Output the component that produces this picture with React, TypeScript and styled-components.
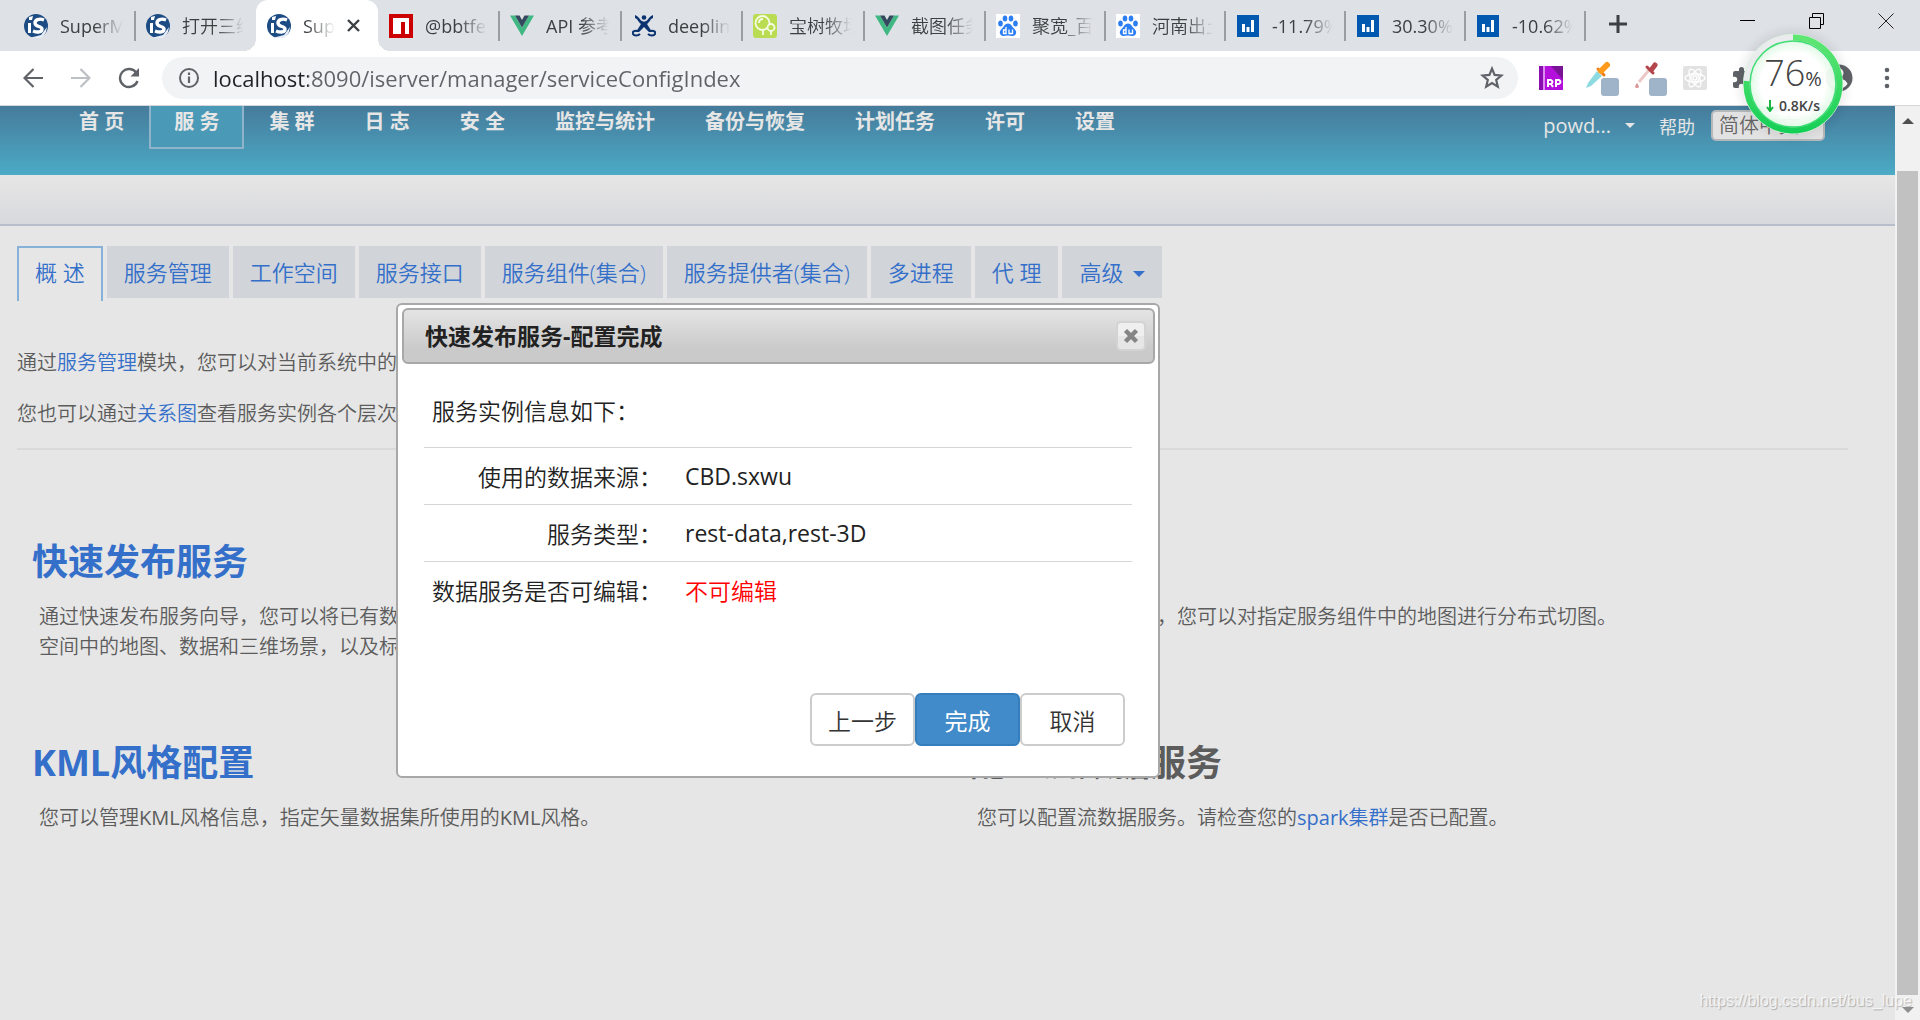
import React from "react";
import styled, { createGlobalStyle, css } from "styled-components";

const sans = `"Open Sans", "Noto Sans CJK SC", sans-serif`;

const GlobalStyle = createGlobalStyle`
  *, *::before, *::after { box-sizing: border-box; }
  body { margin: 0; font-family: ${sans}; background: #e6e6e6; }
  button, input, select { font-family: inherit; font-weight: inherit; }
  button { border: 0; padding: 0; background: none; cursor: pointer; }
  a { color: #346fc9; text-decoration: none; }
`;

/* ---------- browser window ---------- */

const Window = styled.div`
  position: relative;
  display: flex;
  flex-direction: column;
  height: 100vh;
  overflow: hidden;
`;

const TabStrip = styled.header`
  display: flex;
  height: 51px;
  padding-left: 13px;
  background: #dee1e6;
`;

const TabList = styled.nav`
  display: grid;
  grid-template-columns: repeat(4, 122px 121px) repeat(5, 120px);
`;

const BrowserTab = styled.button<{ $active?: boolean; $divided?: boolean }>`
  position: relative;
  display: flex;
  align-items: center;
  gap: 12px;
  min-width: 0;
  padding: 0 12px 0 11px;
  color: #3c4043;
  font-size: 18px;
  line-height: 50px;
  text-align: left;

  &:lang(zh) {
    font-weight: 350;
  }

  ${(p) =>
    p.$divided &&
    css`
      &::after {
        content: "";
        position: absolute;
        right: -1px;
        top: 11px;
        width: 2px;
        height: 30px;
        background: #9a9da1;
      }
    `}

  ${(p) =>
    p.$active &&
    css`
      padding-right: 18px;
      background: #fff;
      border-radius: 12px 12px 0 0;

      &::before,
      &::after {
        content: "";
        position: absolute;
        bottom: 0;
        width: 12px;
        height: 12px;
      }
      &::before {
        left: -12px;
        background: radial-gradient(circle at 0 0, #dee1e6 12px, #fff 12px);
      }
      &::after {
        right: -12px;
        background: radial-gradient(circle at 100% 0, #dee1e6 12px, #fff 12px);
      }
    `}
`;

const TabTitle = styled.span`
  flex: 1;
  min-width: 0;
  overflow: hidden;
  white-space: nowrap;
  mask-image: linear-gradient(90deg, #000 calc(100% - 28px), transparent);
`;

const Favicon = styled.svg`
  flex: none;
  width: 24px;
  height: 24px;
`;

const NewTab = styled.button`
  width: 36px;
  margin-left: 15px;
`;

const WindowControls = styled.div`
  display: flex;
  height: 45px;
  margin-left: auto;
`;

const WindowButton = styled.button`
  width: 69px;
`;

const Toolbar = styled.div`
  display: flex;
  align-items: center;
  height: 55px;
  padding: 0 16px;
  background: #fff;
  border-bottom: 1px solid #d5d7da;
`;

const ToolButton = styled.button`
  display: flex;
  align-items: center;
  justify-content: center;
  flex: none;
  width: 48px;
  height: 42px;
`;

const NavButtons = styled.div`
  display: flex;
  margin-left: -7px;
`;

const AddressBar = styled.label`
  display: flex;
  align-items: center;
  flex: 1;
  gap: 13px;
  height: 42px;
  margin-left: 9px;
  padding: 0 14px 0 16px;
  border-radius: 21px;
  background: #f1f3f4;
`;

const AddressInput = styled.input`
  flex: 1;
  min-width: 0;
  height: 42px;
  padding: 0;
  border: 0;
  outline: 0;
  font-size: 22px;
  color: #5f6368;
  background: linear-gradient(90deg, #202124 95px, #5f6368 95px);
  background-clip: text;
  -webkit-background-clip: text;
  -webkit-text-fill-color: transparent;
`;

const Extensions = styled.div`
  display: flex;
  align-items: center;
  margin-left: 9px;
`;

const MenuButton = styled(ToolButton)`
  width: 34px;
  margin-left: 7px;
`;

/* ---------- page ---------- */

const Viewport = styled.div`
  display: flex;
  flex: 1;
  min-height: 0;
`;

const Page = styled.main`
  position: relative;
  flex: 1;
  min-width: 0;
  overflow: hidden;
  background: #e6e6e6;
  color: #5c5c5c;
  font-weight: 350;
`;

const Latin = styled.span`
  font-weight: 400;
`;

const Banner = styled.div`
  display: flex;
  align-items: flex-start;
  justify-content: space-between;
  height: 69px;
  padding: 0 70px 0 54px;
  background: linear-gradient(#467b9b, #4babc6);
`;

const MainNav = styled.nav`
  display: flex;
`;

const NavLink = styled.a<{ $active?: boolean }>`
  height: 43px;
  padding: 0 23px;
  border: 2px solid transparent;
  border-top: 0;
  color: #e6e6e6;
  font-size: 20px;
  font-weight: 700;
  line-height: 32px;
  white-space: nowrap;
  ${(p) =>
    p.$active &&
    css`
      border-color: #8fb3cb;
      background: #4a99b6;
    `}
`;

const UserNav = styled.div`
  display: flex;
  align-items: center;
  height: 39px;
  font-weight: 400;
`;

const UserButton = styled.button`
  display: flex;
  align-items: center;
  gap: 14px;
  margin-right: 24px;
  color: #e6e6e6;
  font-size: 20px;
`;

const HelpLink = styled.a`
  margin-right: 16px;
  color: #e6e6e6;
  font-size: 18px;
`;

const LanguageSelect = styled.select`
  appearance: none;
  width: 114px;
  height: 31px;
  padding: 0 6px;
  border: 2px solid #b4b8ba;
  border-radius: 5px;
  background: #e2e2e2;
  color: #666;
  font-size: 20px;
  font-weight: 350;
  line-height: 26px;
`;

const Caret = styled.span<{ $size: number }>`
  border: ${(p) => p.$size}px solid transparent;
  border-top-color: currentColor;
  border-bottom: 0;
`;

const SubBand = styled.div`
  height: 51px;
  border-bottom: 2px solid #b7bdca;
  background: linear-gradient(#e6e6e6, #d8d9dc);
`;

const Content = styled.div`
  padding: 20px 47px 0 17px;
`;

const SectionTabs = styled.nav`
  display: flex;
  align-items: flex-start;
  gap: 4px;
  height: 55px;
`;

const SectionTab = styled.a<{ $active?: boolean }>`
  display: flex;
  align-items: center;
  gap: 10px;
  height: 52px;
  padding: 0 17px 3px;
  background: #d1d5da;
  font-size: 22px;
  white-space: nowrap;
  span {
    margin-top: 6px;
  }
  ${(p) =>
    p.$active &&
    css`
      height: 55px;
      padding: 0 16px 7px;
      border: 2px solid #86b2d8;
      border-bottom: 0;
      background: none;
    `}
`;

const Intro = styled.div`
  padding: 47px 0 19px;
  border-bottom: 2px solid #d9d9d9;
`;

const IntroText = styled.p`
  margin: 0;
  font-size: 20px;
  line-height: 30px;
  & + & {
    margin-top: 21px;
  }
`;

const Features = styled.div`
  display: grid;
  grid-template-columns: repeat(2, 1fr);
  column-gap: 58px;
  row-gap: 77px;
  margin-right: -2px;
  padding: 88px 0 0 15px;
`;

const FeatureTitle = styled.h2<{ $muted?: boolean }>`
  margin: 0;
  color: ${(p) => (p.$muted ? "#5c5c5c" : "#346fc9")};
  font-size: 36px;
  line-height: 48px;
`;

const FeatureText = styled.p`
  min-height: 60px;
  margin: 0;
  padding: 16px 0 0 7px;
  box-sizing: content-box;
  font-size: 20px;
  line-height: 30px;
  white-space: nowrap;
`;

/* ---------- wizard window over the page ---------- */

const Dialog = styled.section`
  position: absolute;
  left: 396px;
  top: 197px;
  display: flex;
  flex-direction: column;
  width: 764px;
  height: 475px;
  padding: 3px 3px 3px 4px;
  border: 2px solid #a8a8a8;
  border-radius: 6px;
  background: #fff;
  color: #222;
  font-size: 23px;
`;

const DialogHeader = styled.div`
  display: flex;
  align-items: center;
  justify-content: space-between;
  height: 56px;
  padding: 0 7px 0 21px;
  border: 2px solid #a8a8a8;
  border-radius: 6px;
  background: linear-gradient(#e4e4e4, #cacaca 75%);
`;

const DialogTitle = styled.h1`
  margin: 0;
  font-size: 23px;
  line-height: 32px;
`;

const CloseButton = styled.button`
  display: flex;
  align-items: center;
  justify-content: center;
  width: 30px;
  height: 30px;
  border: 2px solid #d3d3d3;
  border-radius: 5px;
  background: linear-gradient(#efefef 50%, #e6e6e6 50%);
`;

const DialogBody = styled.div`
  flex: 1;
  padding: 0 23px 0 22px;
`;

const InfoTable = styled.table`
  width: 100%;
  border-collapse: collapse;
  text-align: left;

  caption {
    height: 83px;
    padding: 12px 8px 0;
    line-height: 70px;
    text-align: left;
  }
  tr {
    height: 57px;
    border-top: 1px solid #d6d6d6;
  }
  th {
    width: 238px;
    padding: 0;
    font-weight: 350;
    text-align: right;
  }
  td {
    padding: 0 0 0 23px;
  }
`;

const Warning = styled.span`
  color: #f00;
`;

const DialogActions = styled.div`
  display: flex;
  justify-content: flex-end;
  padding: 0 30px 27px;
`;

const ActionButton = styled.button<{ $primary?: boolean }>`
  width: 105px;
  height: 53px;
  border: 2px solid ${(p) => (p.$primary ? "#357ebd" : "#ccc")};
  border-radius: 6px;
  background: ${(p) => (p.$primary ? "#428bca" : "#fff")};
  color: ${(p) => (p.$primary ? "#fff" : "#333")};
  font-size: 23px;
  font-weight: ${(p) => (p.$primary ? 400 : 350)};
`;

/* ---------- scroll bar and floating pieces ---------- */

const ScrollTrack = styled.div`
  display: flex;
  flex-direction: column;
  align-items: center;
  width: 25px;
  background: #f1f1f1;
  color: #505050;
`;

const ScrollArrow = styled.button<{ $dim?: boolean }>`
  flex: none;
  width: 25px;
  height: 25px;
  color: ${(p) => (p.$dim ? "#8f8f8f" : "#505050")};
`;

const ScrollThumb = styled.div`
  flex: 1;
  width: 21px;
  margin-top: 40px;
  background: #c1c1c1;
`;

const Watermark = styled.span`
  position: absolute;
  right: 8px;
  bottom: 8px;
  color: rgba(255, 255, 255, 0.75);
  font-family: "Liberation Sans", sans-serif;
  font-size: 16px;
  line-height: 22px;
  text-shadow: 1px 1px 1px rgba(0, 0, 0, 0.25);
`;

const SpeedBall = styled.aside`
  position: absolute;
  right: 77px;
  top: 34px;
  display: flex;
  flex-direction: column;
  align-items: center;
  width: 100px;
  height: 100px;
  padding-top: 19px;
  border-radius: 50%;
  background: radial-gradient(circle, rgba(255, 255, 255, 0.95) 45%, #cdf6d5 72%);
  box-shadow: 0 0 10px 4px rgba(0, 0, 0, 0.08);
`;

const Ring = styled.svg`
  position: absolute;
  inset: 0;
  width: 100px;
  height: 100px;
`;

const Percent = styled.span`
  color: #444;
  font-size: 36px;
  font-weight: 300;
  line-height: 40px;
  small {
    font-size: 20px;
    font-weight: 400;
  }
`;

const Speed = styled.span`
  display: flex;
  align-items: center;
  gap: 5px;
  color: #444;
  font-size: 14px;
  font-weight: 600;
  line-height: 14px;
`;

/* ---------- icons ---------- */

const SuperMapIcon = () => (
  <Favicon viewBox="0 0 24 24">
    <circle cx="12" cy="12" r="12" fill="#1d4c84" />
    <path d="M5 24a12 12 0 0 0 17-6l1-5-6 8z" fill="#e7edf6" />
    <path d="M4 9h3v10H4zM5 3l4-1-1 4H5z" fill="#fff" />
    <path d="M20 6c-5-2-9 0-9 3 0 4 7 3 7 6 0 3-4 4-9 2" fill="none" stroke="#fff" strokeWidth="3.4" />
  </Favicon>
);

const NpmIcon = () => (
  <Favicon viewBox="0 0 24 24">
    <path d="M0 0h24v24H0z" fill="#c00" />
    <path d="M4 4h16v16h-4V8h-4v12H4z" fill="#fff" />
  </Favicon>
);

const VueIcon = () => (
  <Favicon viewBox="0 0 24 24">
    <path d="M0 1.500h5l7 12 7-12h5L12 22z" fill="#41b883" />
    <path d="M5 1.500h4.500L12 6l2.500-4.500H19l-7 12z" fill="#35495e" />
  </Favicon>
);

const ConfluenceIcon = () => (
  <Favicon viewBox="0 0 24 24" fill="#0a3370">
    <circle cx="12" cy="3.500" r="2.300" />
    <path d="M3 1c3 1 4 3 6 5.500 2 1.500 4 1.500 6 0C17 4 18 2 21 1v3c-3 1-3 4-6 6l5 8h-3l-5-5-5 5H4l5-8C6 8 6 5 3 4z" />
    <path d="M6 17c-4-1-6 1-5 3s5 2 7 0M18 17c4-1 6 1 5 3s-5 2-7 0" fill="none" stroke="#0a3370" strokeWidth="2" />
  </Favicon>
);

const TreeIcon = () => (
  <Favicon viewBox="0 0 24 24">
    <rect width="24" height="24" rx="3" fill="#b9dc52" />
    <g fill="none" stroke="#f6fbe4" strokeWidth="1.800">
      <circle cx="9.500" cy="9" r="7" />
      <path d="M10 21v-5M18 21v-4M6 9c0-2 1-4 4-4" />
      <circle cx="18" cy="13.500" r="3.500" fill="#b9dc52" />
    </g>
  </Favicon>
);

const BaiduIcon = () => (
  <Favicon viewBox="0 0 24 24">
    <path d="M0 0h24v24H0z" fill="#fff" />
    <g fill="#2c7ef5">
      <ellipse cx="4.500" cy="9.500" rx="2.300" ry="3" />
      <ellipse cx="9" cy="4.500" rx="2.300" ry="3" />
      <ellipse cx="15" cy="4.500" rx="2.300" ry="3" />
      <ellipse cx="19.500" cy="9.500" rx="2.300" ry="3" />
      <path d="M12 9.500c3 0 4 3 6 5s3 4 1.500 6c-2 2.500-5 1-7.500 1s-5.500 1.500-7.500-1C3 18.500 4 16.500 6 14.500s3-5 6-5z" />
    </g>
    <path d="M10 13v6.500H7.500v-3.500H10M13 15.500v4h3.500v-4" fill="none" stroke="#fff" strokeWidth="1.300" />
  </Favicon>
);

const ChartIcon = () => (
  <Favicon viewBox="0 0 24 24">
    <path d="M1 1h22v22H1z" fill="#0059ae" />
    <path d="M6 10h3v8H6zM10.500 13h3v5h-3zM15 6h3v12h-3z" fill="#fff" />
  </Favicon>
);

const icons = {
  map: SuperMapIcon,
  npm: NpmIcon,
  vue: VueIcon,
  confluence: ConfluenceIcon,
  tree: TreeIcon,
  baidu: BaiduIcon,
  chart: ChartIcon,
};

const Dropper = ({ head, tube, drop }: { head: string; tube: string; drop?: boolean }) => (
  <svg width="42" height="36" viewBox="-6 0 42 36">
    {drop ? (
      <>
        <path d="M17 10 7 22" stroke={tube} strokeWidth="3" />
        <path d="m20 9 3-4" stroke={head} strokeWidth="5" strokeLinecap="round" />
        <path d="m15 7 6 6" stroke={head} strokeWidth="3" strokeLinecap="round" />
        <path d="M5 23c3 4 2 5 0 5s-3-1 0-5z" fill="#d99a9a" />
      </>
    ) : (
      <>
        <path d="m13 11 5 5L7 26l-5 2 2-5z" fill={tube} />
        <path d="m14 9 6 6" stroke="#f07a14" strokeWidth="3" strokeLinecap="round" />
        <path d="m17 11 6-6" stroke={head} strokeWidth="6" strokeLinecap="round" />
      </>
    )}
    <rect x="17" y="18" width="18" height="18" rx="3" fill="#9fb3c9" />
  </svg>
);

const tabs: { icon: keyof typeof icons; title: string; lang?: string; active?: boolean; divided?: boolean }[] = [
  { icon: "map", title: "SuperMap iServer", divided: true },
  { icon: "map", title: "打开三维场景", lang: "zh" },
  { icon: "map", title: "SuperMap", active: true },
  { icon: "npm", title: "@bbtfe/map", divided: true },
  { icon: "vue", title: "API 参考文档", divided: true },
  { icon: "confluence", title: "deeplink", divided: true },
  { icon: "tree", title: "宝树牧场首页", lang: "zh", divided: true },
  { icon: "vue", title: "截图任务列表", lang: "zh", divided: true },
  { icon: "baidu", title: "聚宽_百度搜索", lang: "zh", divided: true },
  { icon: "baidu", title: "河南出土文物", lang: "zh", divided: true },
  { icon: "chart", title: "-11.79%", divided: true },
  { icon: "chart", title: "30.30% ", divided: true },
  { icon: "chart", title: "-10.62%", divided: true },
];

const navItems = ["首 页", "服 务", "集 群", "日 志", "安 全", "监控与统计", "备份与恢复", "计划任务", "许可", "设置"];
const sectionItems = ["概 述", "服务管理", "工作空间", "服务接口", "服务组件(集合)", "服务提供者(集合)", "多进程", "代 理", "高级"];

export default function App() {
  return (
    <Window>
      <GlobalStyle />
      <TabStrip>
        <TabList>
          {tabs.map((t, i) => {
            const Icon = icons[t.icon];
            return (
              <BrowserTab key={i} lang={t.lang} $active={t.active} $divided={t.divided}>
                <Icon />
                <TabTitle>{t.title}</TabTitle>
                {t.active && (
                  <svg width="13" height="13" viewBox="0 0 13 13">
                    <path d="m1 1 11 11M12 1 1 12" stroke="#3c4043" strokeWidth="2.400" />
                  </svg>
                )}
              </BrowserTab>
            );
          })}
        </TabList>
        <NewTab aria-label="New tab">
          <svg width="18" height="18" viewBox="0 0 18 18">
            <path d="M9 0v18M0 9h18" stroke="#3c4043" strokeWidth="3" />
          </svg>
        </NewTab>
        <WindowControls>
          <WindowButton aria-label="Minimize">
            <svg width="16" height="16" viewBox="0 0 16 16">
              <path d="M0 7.500h15" stroke="#000" />
            </svg>
          </WindowButton>
          <WindowButton aria-label="Restore">
            <svg width="16" height="16" viewBox="0 0 16 16" fill="none" stroke="#000">
              <path d="M.5 4.500h11v11H.5zM3.500 4V.5h11v11H12" />
            </svg>
          </WindowButton>
          <WindowButton aria-label="Close">
            <svg width="16" height="16" viewBox="0 0 16 16">
              <path d="m.5.5 15 15M15.500.5l-15 15" stroke="#222" />
            </svg>
          </WindowButton>
        </WindowControls>
      </TabStrip>

      <Toolbar>
        <NavButtons>
          <ToolButton aria-label="Back">
            <svg width="20" height="20" viewBox="0 0 20 20" fill="none" stroke="#5f6368" strokeWidth="2.200">
              <path d="M20 10H1.500M10.500 1 1.500 10l9 9" />
            </svg>
          </ToolButton>
          <ToolButton aria-label="Forward">
            <svg width="20" height="20" viewBox="0 0 20 20" fill="none" stroke="#bcbfc3" strokeWidth="2.200">
              <path d="M0 10h18.500M9.500 1l9 9-9 9" />
            </svg>
          </ToolButton>
          <ToolButton aria-label="Reload">
            <svg width="22" height="22" viewBox="0 0 22 22">
              <path d="M18.500 6A9 9 0 1 0 19.500 14" fill="none" stroke="#5f6368" strokeWidth="2.400" />
              <path d="M21 1v8.500h-8.500z" fill="#5f6368" />
            </svg>
          </ToolButton>
        </NavButtons>
        <AddressBar>
          <svg width="22" height="22" viewBox="0 0 22 22">
            <circle cx="11" cy="11" r="9" fill="none" stroke="#5f6368" strokeWidth="2" />
            <path d="M11 9.500V16M11 5.500V8" stroke="#5f6368" strokeWidth="2.200" />
          </svg>
          <AddressInput aria-label="Address" defaultValue="localhost:8090/iserver/manager/serviceConfigIndex" />
          <svg width="24" height="24" viewBox="0 0 24 24">
            <path
              d="m12 2.600 2.600 6.300 6.800.6-5.200 4.500 1.600 6.700-5.800-3.600-5.800 3.600L7.800 14 2.600 9.500l6.800-.6z"
              fill="none"
              stroke="#5f6368"
              strokeWidth="2.200"
            />
          </svg>
        </AddressBar>
        <Extensions>
          <ToolButton aria-label="Axure RP">
            <svg width="24" height="24" viewBox="0 0 24 24">
              <path d="M0 0h24v24H0z" fill="#b310dc" />
              <path d="M12 0h12v14z" fill="#7a1496" />
              <path d="M0 0h4v24H0z" fill="#8b0fb0" />
              <path d="M5 0v24" stroke="#e9b8f7" strokeWidth="1.500" />
              <path
                d="M9 21v-7h3q3 2 0 4H9m3 0 2 3M17 21v-7h3q3 2 0 4h-3"
                fill="none"
                stroke="#fff"
                strokeWidth="2"
              />
            </svg>
          </ToolButton>
          <ToolButton aria-label="Color picker">
            <Dropper head="#ff9b1c" tube="#8ddbe0" />
          </ToolButton>
          <ToolButton aria-label="Eye dropper">
            <Dropper head="#b3454b" tube="#ecc8c8" drop />
          </ToolButton>
          <ToolButton aria-label="React tools">
            <svg width="24" height="24" viewBox="0 0 24 24">
              <rect width="24" height="24" rx="2" fill="#e2e2e2" />
              <g fill="none" stroke="#fff" strokeWidth="1.300">
                <ellipse cx="12" cy="12" rx="10" ry="4" />
                <ellipse cx="12" cy="12" rx="10" ry="4" transform="rotate(60 12 12)" />
                <ellipse cx="12" cy="12" rx="10" ry="4" transform="rotate(120 12 12)" />
                <circle cx="12" cy="12" r="2" />
              </g>
            </svg>
          </ToolButton>
          <ToolButton aria-label="Extensions">
            <svg width="24" height="24" viewBox="0 0 24 24">
              <path
                d="M20.500 11H19V7a2 2 0 0 0-2-2h-4V3.500a2.500 2.500 0 0 0-5 0V5H4a2 2 0 0 0-2 2v3.800h1.500a2.700 2.700 0 0 1 0 5.400H2V20a2 2 0 0 0 2 2h3.800v-1.500a2.700 2.700 0 0 1 5.400 0V22H17a2 2 0 0 0 2-2v-4h1.500a2.500 2.500 0 0 0 0-5z"
                fill="#5f6368"
              />
            </svg>
          </ToolButton>
          <ToolButton aria-label="Reading list" />
          <ToolButton aria-label="Profile">
            <svg width="28" height="28" viewBox="0 0 28 28">
              <circle cx="14" cy="14" r="13.500" fill="#5f6368" />
              <circle cx="14" cy="9" r="4.500" fill="#fff" />
              <path d="M5.500 20c2-7 15-7 17 0-4 6-13 6-17 0z" fill="#fff" />
            </svg>
          </ToolButton>
          <MenuButton aria-label="Menu">
            <svg width="6" height="22" viewBox="0 0 6 22" fill="#5f6368">
              <circle cx="3" cy="3" r="2.300" />
              <circle cx="3" cy="11" r="2.300" />
              <circle cx="3" cy="19" r="2.300" />
            </svg>
          </MenuButton>
        </Extensions>
      </Toolbar>

      <Viewport>
        <Page>
          <Banner>
            <MainNav>
              {navItems.map((item, i) => (
                <NavLink key={item} href="#" $active={i === 1}>
                  {item}
                </NavLink>
              ))}
            </MainNav>
            <UserNav>
              <UserButton>
                powd...
                <Caret $size={5} />
              </UserButton>
              <HelpLink href="#">帮助</HelpLink>
              <LanguageSelect aria-label="语言">
                <option>简体中文</option>
              </LanguageSelect>
            </UserNav>
          </Banner>
          <SubBand />
          <Content>
            <SectionTabs>
              {sectionItems.map((item, i) => (
                <SectionTab key={item} href="#" $active={i === 0}>
                  {item}
                  {item === "高级" && <Caret $size={6} />}
                </SectionTab>
              ))}
            </SectionTabs>
            <Intro>
              <IntroText>
                通过<a href="#">服务管理</a>模块，您可以对当前系统中的服务进行管理。
              </IntroText>
              <IntroText>
                您也可以通过<a href="#">关系图</a>查看服务实例各个层次之间的关系。
              </IntroText>
            </Intro>
            <Features>
              <article>
                <FeatureTitle>快速发布服务</FeatureTitle>
                <FeatureText>
                  通过快速发布服务向导，您可以将已有数据发布为服务，包括工作
                  <br />
                  空间中的地图、数据和三维场景，以及标准的网络服务。
                </FeatureText>
              </article>
              <article>
                <FeatureTitle>分布式切图</FeatureTitle>
                <FeatureText>通过分布式切图服务，您可以对指定服务组件中的地图进行分布式切图。</FeatureText>
              </article>
              <article>
                <FeatureTitle>KML风格配置</FeatureTitle>
                <FeatureText>
                  您可以管理<Latin>KML</Latin>风格信息，指定矢量数据集所使用的<Latin>KML</Latin>风格。
                </FeatureText>
              </article>
              <article>
                <FeatureTitle $muted>配置流数据服务</FeatureTitle>
                <FeatureText>
                  您可以配置流数据服务。请检查您的
                  <a href="#">
                    <Latin>spark</Latin>集群
                  </a>
                  是否已配置。
                </FeatureText>
              </article>
            </Features>
          </Content>

          <Dialog role="dialog" aria-labelledby="wizard-title">
            <DialogHeader>
              <DialogTitle id="wizard-title">快速发布服务-配置完成</DialogTitle>
              <CloseButton aria-label="关闭">
                <svg width="16" height="16" viewBox="0 0 16 16">
                  <path d="m2.500 2.500 11 11M13.500 2.500l-11 11" stroke="#858585" strokeWidth="4.500" />
                </svg>
              </CloseButton>
            </DialogHeader>
            <DialogBody>
              <InfoTable>
                <caption>服务实例信息如下：</caption>
                <tbody>
                  <tr>
                    <th scope="row">使用的数据来源：</th>
                    <td>
                      <Latin>CBD.sxwu</Latin>
                    </td>
                  </tr>
                  <tr>
                    <th scope="row">服务类型：</th>
                    <td>
                      <Latin>rest-data,rest-3D</Latin>
                    </td>
                  </tr>
                  <tr>
                    <th scope="row">数据服务是否可编辑：</th>
                    <td>
                      <Warning>不可编辑</Warning>
                    </td>
                  </tr>
                </tbody>
              </InfoTable>
            </DialogBody>
            <DialogActions>
              <ActionButton>上一步</ActionButton>
              <ActionButton $primary>完成</ActionButton>
              <ActionButton>取消</ActionButton>
            </DialogActions>
          </Dialog>
        </Page>
        <ScrollTrack>
          <ScrollArrow aria-label="Scroll up">
            <svg width="12" height="6" viewBox="0 0 12 6" fill="currentColor">
              <path d="M6 0l6 6H0z" />
            </svg>
          </ScrollArrow>
          <ScrollThumb />
          <ScrollArrow aria-label="Scroll down" $dim>
            <svg width="12" height="6" viewBox="0 0 12 6" fill="currentColor">
              <path d="M6 6l6-6H0z" />
            </svg>
          </ScrollArrow>
        </ScrollTrack>
      </Viewport>

      <Watermark>https://blog.csdn.net/bus_lupe</Watermark>

      <SpeedBall>
        <Ring viewBox="0 0 100 100" fill="none">
          <defs>
            <linearGradient id="ring" x1="0" y1="0" x2="0" y2="1">
              <stop offset="0" stopColor="#5fe673" />
              <stop offset="1" stopColor="#16cf57" />
            </linearGradient>
          </defs>
          <circle cx="50" cy="50" r="46.500" stroke="#e9ebec" strokeWidth="6" />
          <circle cx="50" cy="50" r="43" stroke="#3ddc74" strokeWidth="1.500" />
          <path d="M50 3.500A46.500 46.500 0 1 1 3.600 47" stroke="url(#ring)" strokeWidth="6" />
        </Ring>
        <Percent>
          76<small>%</small>
        </Percent>
        <Speed>
          <svg width="8" height="12" viewBox="0 0 8 12">
            <path d="M4 0v10M1 7l3 4 3-4" fill="none" stroke="#18b53f" strokeWidth="2" />
          </svg>
          0.8K/s
        </Speed>
      </SpeedBall>
    </Window>
  );
}
